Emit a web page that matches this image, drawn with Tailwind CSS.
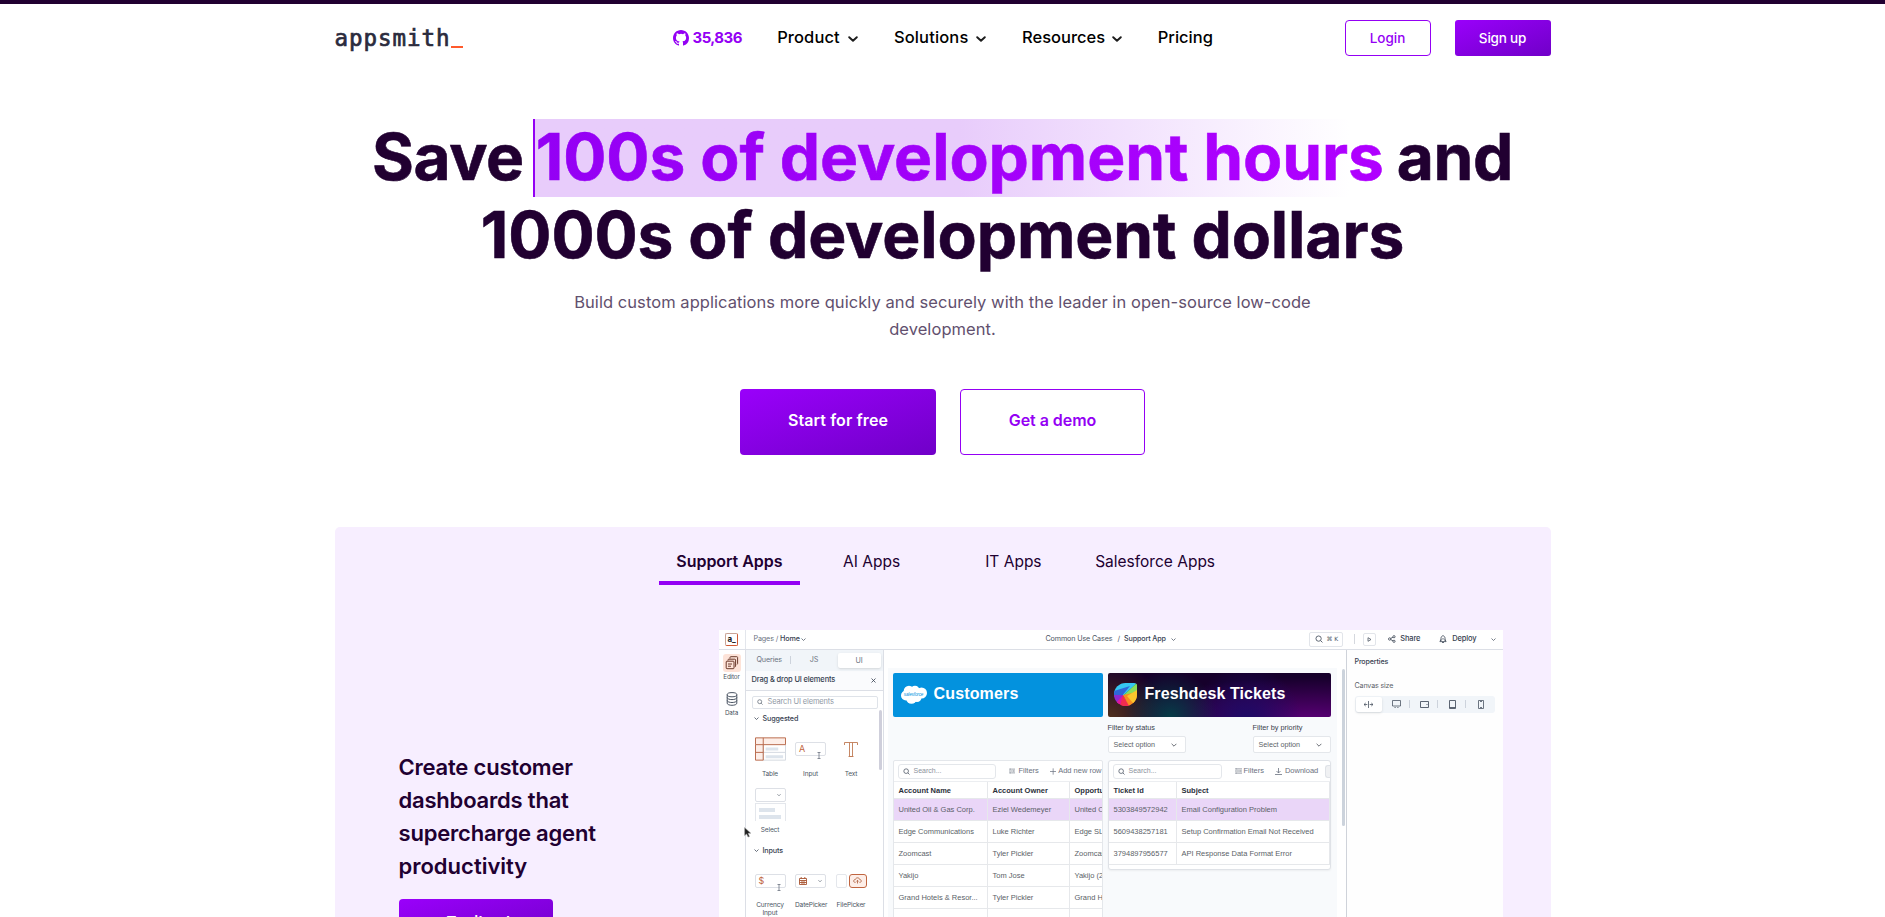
<!DOCTYPE html>
<html lang="en">
<head>
<meta charset="utf-8">
<title>Appsmith</title>
<script src="https://cdn.jsdelivr.net/npm/@tailwindcss/browser@4"></script>
</head>
<body class="h-[917px] overflow-hidden bg-white font-['Inter',sans-serif] text-[#210031]">
<svg class="hidden">
  <symbol id="chev" viewBox="0 0 10 10"><path d="M1.2 3.2 5 6.8 8.8 3.2" fill="none" stroke="currentColor" stroke-width="1.9" stroke-linecap="round" stroke-linejoin="round"/></symbol>
  <symbol id="chev-thin" viewBox="0 0 10 10"><path d="M1 3 5 7 9 3" fill="none" stroke="currentColor" stroke-width="1.5"/></symbol>
  <symbol id="search" viewBox="0 0 10 10"><circle cx="4.5" cy="4.5" r="3.3" fill="none" stroke="currentColor" stroke-width="1.1"/><path d="M7 7 9.3 9.3" stroke="currentColor" stroke-width="1.1"/></symbol>
  <symbol id="filters" viewBox="0 0 10 8"><path d="M0 1h3m1 0h6M0 4h6m1 0h3M0 7h3m1 0h6M3 0v2M7 3v2M3 6v2" fill="none" stroke="currentColor" stroke-width="1"/></symbol>
  <symbol id="ibeam" viewBox="0 0 4 7"><path d="M.5.5h3m-3 6h3M2 .5v6" fill="none" stroke="#6b7280" stroke-width=".8"/></symbol>
</svg>

<div class="h-1 bg-[#210031]"></div>

<div class="mx-auto w-[1216px]">
  <!-- Navigation -->
  <header class="flex h-[68px] items-center">
    <a class="flex h-[30px] w-[338px] items-start font-['DejaVu_Sans_Mono',monospace] text-[22.5px] leading-[30px] text-[#2b2b3d]"><span class="w-[116px] tracking-[0.95px] [-webkit-text-stroke:0.7px_#2b2b3d]">appsmith</span><span class="mt-[23px] h-[2px] w-3 bg-[#ff5a2c]"></span></a>
    <nav class="flex items-center gap-[35.7px] text-[16.5px] font-medium text-black">
      <span class="flex items-center gap-1 text-[15px] font-bold tracking-[-0.55px] text-[#9400f4]">
        <svg class="size-4" viewBox="0 0 16 16" fill="currentColor"><path d="M8 0C3.58 0 0 3.58 0 8c0 3.54 2.29 6.53 5.47 7.59.4.07.55-.17.55-.38 0-.19-.01-.82-.01-1.49-2.01.37-2.53-.49-2.69-.94-.09-.23-.48-.94-.82-1.13-.28-.15-.68-.52-.01-.53.63-.01 1.08.58 1.23.82.72 1.21 1.87.87 2.33.66.07-.52.28-.87.51-1.07-1.78-.2-3.64-.89-3.64-3.95 0-.87.31-1.59.82-2.15-.08-.2-.36-1.02.08-2.12 0 0 .67-.21 2.2.82a7.6 7.6 0 0 1 4 0c1.53-1.04 2.2-.82 2.2-.82.44 1.1.16 1.92.08 2.12.51.56.82 1.27.82 2.15 0 3.07-1.87 3.75-3.65 3.95.29.25.54.73.54 1.48 0 1.07-.01 1.93-.01 2.2 0 .21.15.46.55.38A8.01 8.01 0 0 0 16 8c0-4.42-3.58-8-8-8Z"/></svg>
        <span class="w-[49px]">35,836</span>
      </span>
      <span class="flex items-center gap-2"><span class="w-[63px] pb-[2px] tracking-[0.1px]">Product</span><svg class="mt-0.5 size-[10px] text-[#1c1c1c]"><use href="#chev"/></svg></span>
      <span class="flex items-center gap-2"><span class="w-[74.5px] pb-[2px] tracking-[0.15px]">Solutions</span><svg class="mt-0.5 size-[10px] text-[#1c1c1c]"><use href="#chev"/></svg></span>
      <span class="flex items-center gap-2"><span class="w-[82px] pb-[2px]">Resources</span><svg class="mt-0.5 size-[10px] text-[#1c1c1c]"><use href="#chev"/></svg></span>
      <span class="pb-[2px]">Pricing</span>
    </nav>
    <div class="ml-auto flex gap-6 text-[13.5px] font-medium">
      <a class="flex h-9 w-[86px] items-center justify-center rounded-[4px] border border-[#9400f4] text-[#9400f4]">Login</a>
      <a class="flex h-9 w-24 items-center justify-center rounded-[3px] bg-linear-to-br from-[#9a00fb] to-[#7000c8] tracking-[-0.2px] text-white">Sign up</a>
    </div>
  </header>

  <!-- Hero -->
  <section class="pt-[47px] text-center">
    <h1 class="text-[64px] font-bold leading-[76.8px] tracking-[-0.09px] whitespace-nowrap [-webkit-text-stroke:0.6px_#210031]"><span class="tracking-[-0.4px]">Save</span><span class="ml-[9px] inline-block h-[78px] border-l-2 border-[#9400f4] bg-linear-to-r from-[#e8ccfb] from-50% to-white to-[96%] pl-[1px] leading-[76.8px]"><span class="bg-linear-to-r from-[#9400f4] to-[#b000ff] bg-clip-text text-transparent [-webkit-text-stroke:0.6px_transparent]">100s of development hours</span></span><span class="ml-[13px] tracking-[-0.4px]">and</span><br>1000s of development dollars</h1>
    <p class="mx-auto mt-[15px] w-[780px] text-[16.5px] leading-[27px] tracking-[0.06px] text-[#62506e]">Build custom applications more quickly and securely with the leader in open-source low-code<br>development.</p>
    <div class="mt-[46px] flex justify-center gap-6 text-base font-semibold">
      <a class="flex h-[66px] w-[196px] items-center justify-center rounded-[4px] bg-linear-to-br from-[#9a00fb] to-[#7000c8] pb-[3px] tracking-[0.1px] text-white">Start for free</a>
      <a class="flex h-[66px] w-[185px] items-center justify-center rounded-[4px] border border-[#9400f4] pb-[3px] tracking-[-0.05px] text-[#9400f4]">Get a demo</a>
    </div>
  </section>

  <!-- Use cases -->
  <section class="mt-[72px] h-[391px] rounded-t-[5px] bg-[#f7eeff]">
    <div class="flex justify-center pt-3">
      <div class="grid w-[567px] grid-cols-4 text-center text-[15.5px] leading-[45px] text-[#210031]">
        <a class="mr-px h-[46px] border-b-4 border-[#9400f4] text-base leading-[45px] font-semibold tracking-[-0.05px]">Support Apps</a>
        <a>AI Apps</a><a>IT Apps</a><a>Salesforce Apps</a>
      </div>
    </div>
    <div class="flex">
      <div class="w-[384px] pt-[166px] pl-16">
        <h2 class="text-[22px] leading-[33px] font-semibold tracking-[-0.2px]">Create customer<br>dashboards that<br>supercharge agent<br><span class="tracking-normal">productivity</span></h2>
        <a class="mt-[16px] flex h-[46px] w-[154px] items-center rounded-[4px] bg-linear-to-br from-[#9a00fb] to-[#7000c8] pl-12 text-[15px] font-semibold text-white">Try it out</a>
      </div>

      <!-- Product preview -->
      <div class="mt-[45px] h-[288px] w-[784px] overflow-hidden bg-white text-[7.2px] leading-[10px] text-[#4b5563] tracking-[-0.02em]">
        <div class="flex h-[20px] items-center border-b border-[#dcdfe6]">
          <div class="flex h-full w-[27px] items-center justify-center border-r border-[#e3e6ec]"><span class="flex size-[13px] items-center justify-center rounded-[2px] border border-[#c9a496] border-r-[#d05a35] border-b-[#d05a35] text-[8px] leading-none font-bold text-[#222]">a_</span></div>
          <span class="ml-2 w-[47px] text-[#6b7280]">Pages / <span class="font-medium text-[#374151]">Home</span></span><svg class="size-[5px]"><use href="#chev-thin"/></svg>
          <span class="ml-[240px] w-[68px] whitespace-nowrap">Common Use Cases</span><span class="mx-[4px]">/</span><span class="w-[43px] whitespace-nowrap font-medium text-[#374151]">Support App</span><svg class="ml-[4px] size-[5px]"><use href="#chev-thin"/></svg>
          <div class="ml-auto flex items-center">
            <span class="mr-[11px] flex h-[15px] w-[34px] items-center justify-center gap-1 rounded-[2px] border border-[#e2e5ea] font-['DejaVu_Sans',sans-serif] text-[6px]"><svg class="size-[8px]"><use href="#search"/></svg>⌘ K</span>
            <span class="mr-[8px] h-[10px] w-px bg-[#d5d8de]"></span>
            <span class="mr-[12px] flex size-[13px] items-center justify-center rounded-[2px] border border-[#e2e5ea]"><svg class="size-[5px]" viewBox="0 0 5 5"><path d="M1 .7 4 2.5 1 4.3Z" fill="none" stroke="#4b5563" stroke-width=".8"/></svg></span>
            <svg class="mr-[4px] size-[8px]" viewBox="0 0 8 8"><g fill="none" stroke="#374151" stroke-width=".8"><circle cx="1.7" cy="4" r="1.2"/><circle cx="6" cy="1.7" r="1.1"/><circle cx="6" cy="6.3" r="1.1"/><path d="m2.7 3.4 2.3-1.2M2.7 4.6 5 5.8"/></g></svg>
            <span class="mr-[19px] text-[7.5px] font-medium text-[#374151]">Share</span>
            <svg class="mr-[5px] size-[8px]" viewBox="0 0 8 8"><path d="M2 6V3.2C2 1.8 3 1 4 .6 5 1 6 1.8 6 3.2V6M2 4.4.9 6.600h6.2L6 4.400M4 3v1.600M3 7.500h2" fill="none" stroke="#374151" stroke-width=".8"/></svg>
            <span class="mr-[14px] text-[7.5px] font-medium text-[#374151]">Deploy</span>
            <svg class="mr-[7px] size-[5px]"><use href="#chev-thin"/></svg>
          </div>
        </div>

        <div class="flex h-[268px]">
          <!-- Rail -->
          <div class="relative flex w-[27px] flex-col items-center border-r border-[#dcdfe6] pt-[4px] text-[6.3px] leading-[8px]">
            <span class="flex size-[18px] items-center justify-center rounded-[3px] bg-[#fde3d8]"><svg class="size-[14px]" viewBox="0 0 14 14"><g fill="none" stroke="#6b3a2c" stroke-width="1"><path d="M5 2.500V1.500q0-.8.8-.8h6q.8 0 .8.8v6q0 .8-.8.8"/><path d="M3 4.500V4q0-.8.8-.8h6q.8 0 .8.8v6q0 .8-.8.8"/><rect x="1.200" y="5.200" width="7.800" height="7.500" rx=".8"/><path d="M3 8h4M3 10.200h3"/></g></svg></span>
            <span class="mt-[1px]">Editor</span>
            <svg class="mt-[11px] h-[14px] w-[12px]" viewBox="0 0 12 14"><g fill="none" stroke="#4b5563" stroke-width="1"><ellipse cx="6" cy="2.700" rx="4.800" ry="2.100"/><path d="M1.200 2.700v8.500c0 2.800 9.600 2.800 9.600 0V2.700M1.200 5.500c0 2.800 9.600 2.800 9.600 0M1.200 8.400c0 2.800 9.600 2.800 9.600 0"/></g></svg>
            <span class="mt-[3px]">Data</span>
            <svg class="absolute top-[177px] left-[25px] z-10 h-[11px] w-[8px]" viewBox="0 0 8 11"><path d="M.6.6v8l2-1.700 1.400 3.200 1.500-.6-1.400-3.200h2.800Z" fill="#222" stroke="#aaa" stroke-width=".5"/></svg>
          </div>

          <!-- Widget panel -->
          <div class="relative w-[138px] border-r border-[#dcdfe6]">
            <div class="flex h-[21px] items-center bg-[#f1f5f9] text-[#6b7280]">
              <span class="w-[44px] pl-[11px]">Queries</span><span class="h-2 w-px bg-[#cdd3dc]"></span><span class="w-[47px] text-center">JS</span><span class="h-[15px] w-[43px] rounded-[2px] bg-white text-center leading-[15px] shadow-sm">UI</span>
            </div>
            <div class="flex h-[20px] items-center justify-between border-b border-[#dcdfe6] bg-[#fafbfd] px-[6px] text-[7.5px] font-medium text-[#374151]">Drag &amp; drop UI elements<svg class="mr-[1px] size-[5px]" viewBox="0 0 5 5"><path d="m.5.5 4 4m0-4-4 4" stroke="#374151" stroke-width=".8"/></svg></div>
            <div class="mt-[5px] ml-[6px] flex h-[13px] w-[126px] items-center gap-[5px] rounded-[2px] border border-[#dfe3e9] pl-[4px] text-[7.5px] text-[#9098a5]"><svg class="size-[6px] text-[#4b5563]"><use href="#search"/></svg>Search UI elements</div>
            <div class="mt-[5px] ml-[8px] flex items-center gap-[4px] font-medium text-[#374151]"><svg class="size-[5px]"><use href="#chev-thin"/></svg>Suggested</div>
            <div class="mt-[13px] grid grid-cols-[31px_31px_31px] gap-x-[9.500px] pl-[9px] text-center text-[6.500px] leading-[8px]">
              <div class="h-[51px]"><div class="flex h-[27px] justify-center"><svg class="h-[24px] w-[32px]" viewBox="0 0 32 24"><path d="M.5.5h31v7h-23v16h-8Z" fill="#fdeee8"/><path d="M8.500 15.500h23m-23-8v16h23v-16" fill="none" stroke="#d4d9e0"/><path d="M.5.5h31v7H.5Zm0 7v16h8V.5m-8 15h8" fill="none" stroke="#b9694b"/><path d="M11 10.500h13v3H11zm0 8h18v3H11z" fill="#dde4ec"/></svg></div><div class="mt-[6px]">Table</div></div>
              <div><div class="h-[27px] pt-[5px]"><div class="relative flex h-[14px] items-center rounded-[2px] border border-[#dde0e6] pl-[3px] text-[9px] text-[#c06540]">A<svg class="absolute right-[4px] -bottom-[4px] h-[7px] w-1"><use href="#ibeam"/></svg></div></div><div class="mt-[6px]">Input</div></div>
              <div><div class="flex h-[27px] justify-center pt-[5px]"><svg class="h-[15px] w-[14px]" viewBox="0 0 14 15"><path d="M.5 3V.5h13V3M5.500.5v14h3V.5M4.500 14.500h5" fill="none" stroke="#bf7a55" stroke-width=".9"/></svg></div><div class="mt-[6px]">Text</div></div>
              <div class="h-[46px]"><div class="flex h-[14px] items-center justify-end rounded-[2px] border border-[#dde0e6] pr-[4px]"><svg class="size-[4px]"><use href="#chev-thin"/></svg></div><div class="mt-[1px] flex h-[18px] flex-col gap-[3px] border border-b-0 border-[#e4e7ec] pt-[4px] pl-[3px]"><span class="h-[4px] w-[16px] bg-[#dde4ec]"></span><span class="h-[4px] w-[22px] bg-[#dde4ec]"></span></div><div class="mt-[5px]">Select</div></div>
            </div>
            <div class="mt-[12px] ml-[8px] flex items-center gap-[4px] font-medium text-[#374151]"><svg class="size-[5px]"><use href="#chev-thin"/></svg>Inputs</div>
            <div class="mt-[18px] grid grid-cols-[31px_31px_31px] gap-x-[9.500px] pl-[9px] text-center text-[6.600px] leading-[8px]">
              <div><div class="relative flex h-[14px] items-center rounded-[2px] border border-[#dde0e6] pl-[3px] text-[9px] text-[#c06540]">$<svg class="absolute right-[4px] -bottom-[4px] h-[7px] w-1"><use href="#ibeam"/></svg></div><div class="mt-[13px]">Currency<br>Input</div></div>
              <div><div class="flex h-[14px] items-center justify-between rounded-[2px] border border-[#dde0e6] px-[3px]"><svg class="size-[8px]" viewBox="0 0 8 8"><path d="M.5 1.500h7v6h-7Zm0 2h7m-7 2h7M3 3.500v4m2-4v4M2.200 0v1.500M5.800 0v1.500" fill="none" stroke="#a85532" stroke-width=".9"/></svg><svg class="size-[4px]"><use href="#chev-thin"/></svg></div><div class="mt-[13px] whitespace-nowrap">DatePicker</div></div>
              <div><div class="flex h-[14px] gap-[2px]"><span class="w-[12px] rounded-[2px] border border-[#e4e7ec]"></span><span class="flex w-[18px] items-center justify-center rounded-[3px] border border-[#c06540] bg-[#fdeee8]"><svg class="h-[7px] w-[9px]" viewBox="0 0 9 7"><path d="M2.500 5.500C.2 5.500 0 2.700 2.300 2.500 3 .2 6.300.3 6.700 2.500 9 2.700 8.700 5.500 6.500 5.500M4.500 6.500V3.500m-1.200 1 1.200-1.200 1.200 1.200" fill="none" stroke="#a85532" stroke-width=".8"/></svg></span></div><div class="mt-[13px] whitespace-nowrap">FilePicker</div></div>
            </div>
            <span class="absolute top-[60px] right-px h-[60px] w-[3px] rounded bg-[#cfcfdb]"></span>
          </div>

          <!-- Canvas -->
          <div class="flex w-[462px] justify-between font-['Liberation_Sans',Arial,sans-serif] text-[7.5px] tracking-normal">
            <div class="mt-[18px] ml-[4px] flex w-[449px] gap-[5px] bg-[#f8fafc] pt-[5px] pl-[5px]">
              <div class="w-[210px]">
                <div class="flex h-[44px] items-center gap-[7px] rounded-[2px] bg-[#0392de] pb-px pl-[8px] text-[16px] font-bold tracking-[0.15px] text-white">
                  <span class="relative mt-px flex h-[19px] w-[26px] items-center justify-center"><svg class="absolute inset-0 size-full" viewBox="0 0 26 19" fill="#fff"><circle cx="8" cy="6" r="5.300"/><circle cx="14" cy="5.300" r="4.500"/><circle cx="20.500" cy="8" r="5.500"/><circle cx="5" cy="10.500" r="5"/><circle cx="10.500" cy="13.500" r="5.300"/><circle cx="16" cy="12.500" r="4.500"/></svg><span class="relative text-[4.500px] leading-[6px] font-normal tracking-[-0.1px] text-[#0392de] italic">salesforce</span></span>Customers
                </div>
                <div class="mt-[43px] h-[200px] overflow-hidden rounded-[2px] border border-[#e4e7eb] bg-white whitespace-nowrap">
                  <div class="flex h-[21px] items-center border-b border-[#eceef1] pt-px pl-[4px] text-[#6b7280]">
                    <span class="flex h-[15px] w-[109px] items-center gap-[4px] rounded-[3px] border border-[#e4e7eb] pl-[4px] text-[7px] text-[#8b929d]"><svg class="size-[7px] text-[#4b5563]"><use href="#search"/></svg>Search...</span>
                    <svg class="ml-[13px] h-[6px] w-[7px]"><use href="#filters"/></svg><span class="ml-[3px]">Filters</span>
                    <svg class="ml-[11px] size-[7px]" viewBox="0 0 7 7"><path d="M3.500 0v7M0 3.500h7" stroke="#6b7280" stroke-width=".8"/></svg><span class="ml-[2px]">Add new row</span>
                  </div>
                  <div class="grid w-[240px] grid-cols-[94px_82px_64px] text-[#5b5f68] [&>span]:flex [&>span]:h-[22px] [&>span]:items-center [&>span]:border-r [&>span]:border-b [&>span]:border-[#e6e8eb] [&>span]:pt-[2px] [&>span]:pl-[5px]">
                    <b class="flex h-[17px] items-center border-r border-b border-[#e6e8eb] pt-[2px] pl-[5px] text-[#2b303a]">Account Name</b><b class="flex h-[17px] items-center border-r border-b border-[#e6e8eb] pt-[2px] pl-[5px] text-[#2b303a]">Account Owner</b><b class="flex h-[17px] items-center border-b border-[#e6e8eb] pt-[2px] pl-[5px] text-[#2b303a]">Opportunity</b>
                    <span class="bg-[#ead6f8]">United Oil &amp; Gas Corp.</span><span class="bg-[#ead6f8]">Eziel Wedemeyer</span><span class="bg-[#ead6f8]">United Oil</span>
                    <span>Edge Communications</span><span>Luke Richter</span><span>Edge SLA</span>
                    <span>Zoomcast</span><span>Tyler Pickler</span><span>Zoomcast</span>
                    <span>Yakijo</span><span>Tom Jose</span><span>Yakijo (2)</span>
                    <span>Grand Hotels &amp; Resor...</span><span>Tyler Pickler</span><span>Grand Hotels</span>
                    <span>Dandelion</span><span>Christopher Drake</span><span>United Partners</span>
                  </div>
                </div>
              </div>
              <div class="w-[223px]">
                <div class="flex h-[44px] items-center gap-[8px] rounded-[2px] bg-[radial-gradient(circle_at_28%_100%,#053c46_0%,transparent_28%),radial-gradient(circle_at_0%_110%,#54331c_0%,transparent_26%),radial-gradient(circle_at_62%_110%,#1b0b66_0%,transparent_38%),radial-gradient(ellipse_at_92%_110%,#5c0079_0%,transparent_65%)] bg-[#16002b] pb-px pl-[6px] text-[16px] font-bold tracking-[0.1px] whitespace-nowrap text-white">
                  <svg class="mt-px size-[23px]" viewBox="0 0 23 23"><clipPath id="leaf"><path d="M11.500 0H20q3 0 3 3v8.500A11.500 11.500 0 1 1 11.500 0Z"/></clipPath><g clip-path="url(#leaf)"><path fill="#35c7f2" d="M0 0h23L9 13 0 12Z"/><path fill="#22c98a" d="M23 0v6L9 13Z"/><path fill="#8add5a" d="M23 0v8l-8 5-6 0Z"/><path fill="#2e67d8" d="M0 8l16-5L8 13 0 14Z"/><path fill="#8e2ad0" d="M0 12h10l-6 9-4-2Z"/><path fill="#e0169a" d="m9 12-7 8 8 3Z"/><path fill="#f02c50" d="m9 12-3 11h10Z"/><path fill="#f98b22" d="m9 12 6 11 8-5V9Z"/><path fill="#fbc62d" d="m13 13 10-6v11l-4 2Z"/></g></svg>Freshdesk Tickets
                </div>
                <div class="flex justify-between pt-[6px] text-[7.3px] text-[#3b414d]">
                  <div class="w-[78px]">Filter by status<div class="mt-[3px] flex h-[17px] items-center justify-between rounded-[2px] border border-[#e4e7eb] bg-white pt-px pr-[8px] pl-[5px] text-[7.2px] text-[#5b5f68]">Select option<svg class="size-[6px]"><use href="#chev-thin"/></svg></div></div>
                  <div class="w-[78px]">Filter by priority<div class="mt-[3px] flex h-[17px] items-center justify-between rounded-[2px] border border-[#e4e7eb] bg-white pt-px pr-[8px] pl-[5px] text-[7.2px] text-[#5b5f68]">Select option<svg class="size-[6px]"><use href="#chev-thin"/></svg></div></div>
                </div>
                <div class="mt-[7px] h-[110px] overflow-hidden rounded-[3px] border border-[#dfe2e7] bg-white whitespace-nowrap shadow-xs">
                  <div class="flex h-[21px] items-center border-b border-[#eceef1] pt-px pl-[4px] text-[#6b7280]">
                    <span class="flex h-[15px] w-[109px] items-center gap-[4px] rounded-[3px] border border-[#e4e7eb] pl-[4px] text-[7px] text-[#8b929d]"><svg class="size-[7px] text-[#4b5563]"><use href="#search"/></svg>Search...</span>
                    <svg class="ml-[13px] h-[6px] w-[7px]"><use href="#filters"/></svg><span class="ml-[2px]">Filters</span>
                    <svg class="ml-[11px] size-[7px]" viewBox="0 0 7 7"><path d="M3.500 0v5M1.500 3l2 2 2-2M0 6.500h7" fill="none" stroke="#6b7280" stroke-width=".8"/></svg><span class="ml-[3px]">Download</span>
                    <span class="ml-auto h-[13px] w-[5px] rounded-l-[3px] border border-r-0 border-[#dfe2e7] bg-[#f0f1f3]"></span>
                  </div>
                  <div class="grid grid-cols-[68px_153px] text-[#5b5f68] [&>span]:flex [&>span]:h-[22px] [&>span]:items-center [&>span]:border-r [&>span]:border-b [&>span]:border-[#e6e8eb] [&>span]:pt-[2px] [&>span]:pl-[5px]">
                    <b class="flex h-[17px] items-center border-r border-b border-[#e6e8eb] pt-[2px] pl-[5px] text-[#2b303a]">Ticket Id</b><b class="flex h-[17px] items-center border-r border-b border-[#e6e8eb] pt-[2px] pl-[5px] text-[#2b303a]">Subject</b>
                    <span class="bg-[#ead6f8]">5303849572942</span><span class="bg-[#ead6f8]">Email Configuration Problem</span>
                    <span>5609438257181</span><span>Setup Confirmation Email Not Received</span>
                    <span>3794897956577</span><span>API Response Data Format Error</span>
                  </div>
                </div>
              </div>
            </div>
            <span class="mt-[19px] mr-[1px] h-[157px] w-[3px] rounded bg-[#ccd3dc]"></span>
          </div>

          <!-- Properties -->
          <div class="flex-1 border-l border-[#cfd3da] bg-[#fefefe] pt-[7px] pl-[8px] text-[7.1px]">
            <div class="font-medium text-[#374151]">Properties</div>
            <div class="mt-[14px] text-[#5b5f68]">Canvas size</div>
            <div class="mt-[5px] flex h-[17px] w-[140px] items-center rounded-[3px] bg-[#f1f5f9] text-[#4b5563]">
              <span class="ml-px flex h-[15px] w-[26px] items-center justify-center rounded-[2px] bg-white shadow-sm"><svg class="h-[7px] w-[9px]" viewBox="0 0 9 7"><path d="M4.500 0v7M0 3.500h3.300M5.700 3.500H9M1.700 2 0 3.500 1.700 5M7.300 2 9 3.500 7.300 5" fill="none" stroke="currentColor" stroke-width=".8"/></svg></span>
              <span class="flex w-[27px] justify-center pl-[3px]"><svg class="h-[8px] w-[9px]" viewBox="0 0 9 8"><path d="M.5.5h8v5.500h-8ZM2.500 7.500h1.200M5.300 7.500h1.200" fill="none" stroke="currentColor" stroke-width=".8"/></svg></span><i class="h-2 w-px bg-[#cdd3dc]"></i>
              <span class="flex w-[27px] justify-center pl-[3px]"><svg class="h-[7px] w-[9px]" viewBox="0 0 9 7"><path d="M.5.5h8v6h-8Zm6.500 2.500v1" fill="none" stroke="currentColor" stroke-width=".9"/></svg></span><i class="h-2 w-px bg-[#cdd3dc]"></i>
              <span class="flex w-[27px] justify-center pl-[2px]"><svg class="h-[9px] w-[7px]" viewBox="0 0 7 9"><path d="M.5.5h6v8h-6Zm0 7h6" fill="none" stroke="currentColor" stroke-width=".9"/></svg></span><i class="h-2 w-px bg-[#cdd3dc]"></i>
              <span class="flex w-[28px] justify-center pl-[2px]"><svg class="h-[9px] w-[6px]" viewBox="0 0 6 9"><path d="M.5.5h5v8h-5ZM2 1.500h2M2 7.500h2" fill="none" stroke="currentColor" stroke-width=".8"/></svg></span>
            </div>
          </div>
        </div>
      </div>
    </div>
  </section>
</div>
</body>
</html>
